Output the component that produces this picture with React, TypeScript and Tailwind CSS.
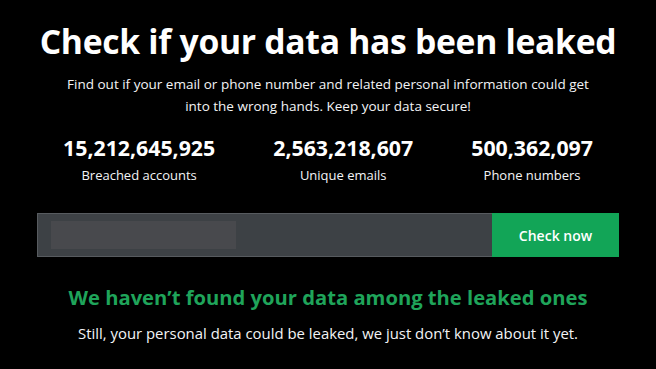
import { useState } from 'react'

const stats = [
  { value: '15,212,645,925', label: 'Breached accounts' },
  { value: '2,563,218,607', label: 'Unique emails' },
  { value: '500,362,097', label: 'Phone numbers' },
]

export default function App() {
  const [query, setQuery] = useState('')

  return (
    <div
      className="w-[656px] h-[369px] bg-black text-white flex flex-col items-center overflow-hidden"
      style={{ fontFamily: '"Open Sans", "Noto Sans", sans-serif' }}
    >
      <h1 className="mt-[18px] text-[33.7px] leading-[46px] font-bold tracking-[-0.3px]">
        Check if your data has been leaked
      </h1>
      <p className="mt-[9px] w-[526px] text-center text-[13.5px] leading-[22px] text-gray-100">
        Find out if your email or phone number and related personal information could get into the
        wrong hands. Keep your data secure!
      </p>

      {/* Stats */}
      <div className="mt-[17px] flex justify-center gap-[58px]">
        {stats.map((s) => (
          <div key={s.label} className="flex flex-col items-center">
            <span className="text-[21.3px] leading-[28px] font-bold">{s.value}</span>
            <span className="mt-[3px] text-[13px] leading-[20px] text-gray-100">{s.label}</span>
          </div>
        ))}
      </div>

      {/* Search */}
      <div className="mt-[28px] w-[582px] h-[44px] flex border border-[#575b5f] bg-[#3d4145]">
        <div className="flex-1 flex items-center pl-[13px]">
          <input
            value={query}
            onChange={(e) => setQuery(e.target.value)}
            className="w-[185px] h-[28px] bg-[#48494d] outline-none px-2 text-sm text-white"
          />
        </div>
        <button className="w-[127px] h-[44px] bg-[#12a557] text-white text-[14px] font-semibold -my-px -mr-px">
          Check now
        </button>
      </div>

      <h2 className="mt-[27px] text-[20.2px] leading-[26px] font-bold text-[#1fa45a]">
        We haven’t found your data among the leaked ones
      </h2>
      <p className="mt-[13px] text-[14.9px] leading-[20px] text-gray-100">
        Still, your personal data could be leaked, we just don’t know about it yet.
      </p>
    </div>
  )
}
